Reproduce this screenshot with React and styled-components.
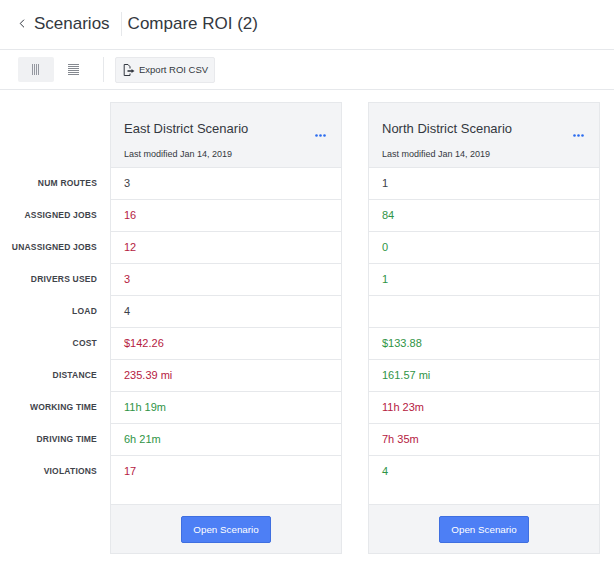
import React from "react";
import styled, { createGlobalStyle } from "styled-components";

const GlobalStyle = createGlobalStyle`
  html, body {
    margin: 0;
    padding: 0;
    background: #fff;
    font-family: "Liberation Sans", Arial, sans-serif;
    color: #333840;
  }
`;

const Page = styled.div`
  width: 614px;
  height: 567px;
  overflow: hidden;
`;

const TopBar = styled.header`
  display: flex;
  align-items: center;
  height: 50px;
  box-sizing: border-box;
  padding: 0 0 2px 19px;
  border-bottom: 1px solid #e6e8eb;
  font-size: 17px;
`;

const BackLink = styled.a`
  display: flex;
  align-items: center;
  gap: 9px;
  padding-right: 11px;
  height: 24px;
`;

const PageTitle = styled.h1`
  margin: 0;
  padding-left: 6px;
  height: 24px;
  line-height: 24px;
  font-size: 17px;
  font-weight: 400;
  border-left: 1px solid #e6e8eb;
`;

const ToolBar = styled.div`
  display: flex;
  align-items: center;
  height: 40px;
  box-sizing: border-box;
  padding-left: 18px;
  border-bottom: 1px solid #e6e8eb;
`;

const ViewButton = styled.button`
  display: flex;
  align-items: center;
  justify-content: center;
  width: 36px;
  height: 25px;
  margin-right: 1px;
  padding: 0;
  border: 0;
  border-radius: 2px;
  background: ${({ $active }) => ($active ? "#f0f1f3" : "transparent")};
`;

const ToolDivider = styled.span`
  width: 1px;
  height: 25px;
  margin: 0 11px 0 11px;
  background: #e6e8eb;
`;

const ExportButton = styled.button`
  display: flex;
  align-items: center;
  gap: 4px;
  height: 26px;
  padding: 0 6px 0 7px;
  border: 1px solid #e8e9ec;
  border-radius: 2px;
  background: #f3f4f6;
  color: #333840;
  font-family: inherit;
  font-size: 9.5px;
`;

const Body = styled.div`
  display: flex;
  padding-top: 12px;
`;

const LabelColumn = styled.div`
  width: 110px;
  padding-top: 65px;
  flex-shrink: 0;
`;

const Label = styled.div`
  height: 32px;
  box-sizing: border-box;
  padding: 10px 13px 0 0;
  line-height: 12px;
  text-align: right;
  font-size: 8.5px;
  font-weight: 700;
  letter-spacing: 0.2px;
  white-space: nowrap;
  color: #3f444b;
`;

const Cards = styled.div`
  display: flex;
  gap: 26px;
`;

const Card = styled.section`
  width: 232px;
  height: 452px;
  box-sizing: border-box;
  display: flex;
  flex-direction: column;
  border: 1px solid #e6e8eb;
`;

const CardHeader = styled.div`
  position: relative;
  height: 64px;
  box-sizing: border-box;
  padding: 17px 13px 0;
  background: #f3f4f6;
`;

const CardTitle = styled.h2`
  margin: 0;
  font-size: 13px;
  line-height: 18px;
  font-weight: 400;
`;

const Modified = styled.div`
  margin-top: 10px;
  font-size: 9px;
  line-height: 12px;
`;

const MoreIcon = styled.svg`
  position: absolute;
  right: 15px;
  top: 31px;
`;

const Row = styled.div`
  height: 32px;
  box-sizing: border-box;
  padding: 8px 13px 0;
  border-top: 1px solid #e6e8eb;
  font-size: 11px;
  line-height: 14px;
  color: ${({ $tone }) =>
    $tone === "bad" ? "#b5213f" : $tone === "good" ? "#2f9446" : "#3c4148"};
`;

const TallRow = styled(Row)`
  flex: 1;
`;

const CardFooter = styled.div`
  display: flex;
  align-items: center;
  justify-content: center;
  height: 49px;
  box-sizing: border-box;
  border-top: 1px solid #e6e8eb;
  background: #f3f4f6;
`;

const OpenButton = styled.button`
  width: 90px;
  height: 27px;
  padding: 0;
  border: 1px solid #3f6fe0;
  border-radius: 2px;
  background: #4d7ff5;
  color: #fff;
  font-family: inherit;
  font-size: 9.8px;
`;

const labels = [
  "NUM ROUTES",
  "ASSIGNED JOBS",
  "UNASSIGNED JOBS",
  "DRIVERS USED",
  "LOAD",
  "COST",
  "DISTANCE",
  "WORKING TIME",
  "DRIVING TIME",
  "VIOLATIONS",
];

const scenarios = [
  {
    name: "East District Scenario",
    rows: [
      ["3"],
      ["16", "bad"],
      ["12", "bad"],
      ["3", "bad"],
      ["4"],
      ["$142.26", "bad"],
      ["235.39 mi", "bad"],
      ["11h 19m", "good"],
      ["6h 21m", "good"],
      ["17", "bad"],
    ],
  },
  {
    name: "North District Scenario",
    rows: [
      ["1"],
      ["84", "good"],
      ["0", "good"],
      ["1", "good"],
      [""],
      ["$133.88", "good"],
      ["161.57 mi", "good"],
      ["11h 23m", "bad"],
      ["7h 35m", "bad"],
      ["4", "good"],
    ],
  },
];

const ColumnsIcon = () => (
  <svg width="8" height="11" viewBox="0 0 8 11" stroke="#7d828a" strokeWidth="0.8">
    <path d="M.5 0v11M2.5 0v11M4.5 0v11M6.5 0v11" />
  </svg>
);

const RowsIcon = () => (
  <svg width="11" height="11" viewBox="0 0 11 11" stroke="#666b73" strokeWidth="0.8">
    <path d="M0 .5h11M0 2.5h11M0 4.5h11M0 6.5h11M0 8.5h11M0 10.5h11" />
  </svg>
);

const ExportIcon = () => (
  <svg width="12" height="12" viewBox="0 0 12 12" fill="none" stroke="#333840" strokeWidth="1">
    <path d="M7 4.5V2.7L5 .5H1.2v11H7V9.5" />
    <path d="M4.5 7H9" strokeWidth="1.6" />
    <path d="M8.5 5l3 2-3 2z" fill="#333840" stroke="none" />
  </svg>
);

const ScenarioCard = ({ name, rows }) => (
  <Card>
    <CardHeader>
      <CardTitle>{name}</CardTitle>
      <Modified>Last modified Jan 14, 2019</Modified>
      <MoreIcon width="11" height="3" viewBox="0 0 11 3" fill="#2b6cf0">
        <circle cx="1.5" cy="1.5" r="1.3" />
        <circle cx="5.5" cy="1.5" r="1.3" />
        <circle cx="9.5" cy="1.5" r="1.3" />
      </MoreIcon>
    </CardHeader>
    {rows.map(([value, tone], i) =>
      i === rows.length - 1 ? (
        <TallRow key={i} $tone={tone}>
          {value}
        </TallRow>
      ) : (
        <Row key={i} $tone={tone}>
          {value}
        </Row>
      )
    )}
    <CardFooter>
      <OpenButton>Open Scenario</OpenButton>
    </CardFooter>
  </Card>
);

const App = () => (
  <Page>
    <GlobalStyle />
    <TopBar>
      <BackLink>
        <svg width="6" height="9" viewBox="0 0 6 9" fill="none" stroke="#333840" strokeWidth="1">
          <path d="M5 .7L1.2 4.5 5 8.3" />
        </svg>
        Scenarios
      </BackLink>
      <PageTitle>Compare ROI (2)</PageTitle>
    </TopBar>
    <ToolBar>
      <ViewButton $active>
        <ColumnsIcon />
      </ViewButton>
      <ViewButton>
        <RowsIcon />
      </ViewButton>
      <ToolDivider />
      <ExportButton>
        <ExportIcon />
        Export ROI CSV
      </ExportButton>
    </ToolBar>
    <Body>
      <LabelColumn>
        {labels.map((label) => (
          <Label key={label}>{label}</Label>
        ))}
      </LabelColumn>
      <Cards>
        {scenarios.map((s) => (
          <ScenarioCard key={s.name} {...s} />
        ))}
      </Cards>
    </Body>
  </Page>
);

export default App;
